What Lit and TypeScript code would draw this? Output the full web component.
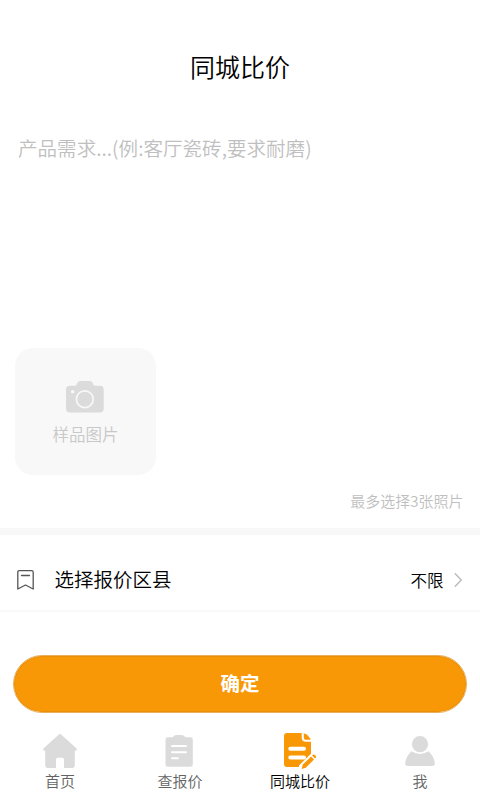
import { LitElement, html, css, svg } from "lit";
import { customElement, state } from "lit/decorators.js";
import { classMap } from "lit/directives/class-map.js";

const homeIcon = svg`
  <path d="M15.9 1.4 Q17 .6 18.1 1.4 L33.6 15.6 Q34.5 17 33 17.5 H31.8 V32 Q31.8 34.9 29.3 34.9 H21 V26.4 Q21 24.8 19.4 24.8 H14.6 Q13 24.8 13 26.4 V34.9 H4.7 Q2.2 34.9 2.2 32 V17.5 H1 Q-.5 17 .4 15.6 Z"/>`;

const quoteIcon = svg`
  <path d="M5 4.2 H9.5 Q11.2 2 13.7 2 H18.3 Q20.8 2 22.5 4.2 H27.3 Q29.8 4.2 29.8 6.7 V31.3 Q29.8 33.8 27.3 33.8 H5 Q2.5 33.8 2.5 31.3 V6.7 Q2.5 4.2 5 4.2 Z"/>
  <path class="line" d="M9 13 H23 M9 19.2 H23 M9 25.2 H15"/>`;

const compareIcon = svg`
  <path d="M4 0 H18.7 V4.5 Q18.7 8.8 23 8.8 H28 V20.8 L16 32.4 V34 H4 Q1 34 1 31 V3 Q1 0 4 0 Z"/>
  <path d="M20.8 .2 Q25.8 2 27.8 6.8 H23.3 Q20.8 6.8 20.8 4.2 Z"/>
  <path class="line thick" d="M7.3 15.7 H21 M7.3 24.6 H21"/>
  <path class="pencil" d="M19.8 31.6 L28.1 23.6 L31 26.4 L22.8 34.8 L18.6 36 Z"/>
  <path d="M29.1 22.5 L29.9 21.7 Q30.9 21 31.9 21.9 L32.7 22.7 Q33.6 23.7 32.8 24.7 L32 25.4 Z"/>`;

const userIcon = svg`
  <circle cx="17" cy="11.2" r="8.1"/>
  <path d="M8.7 18.3 Q12 21 17 21 Q22 21 25.3 18.3 Q30.3 22 31.7 29.3 Q32.3 33 29 33 H5 Q1.7 33 2.3 29.3 Q3.7 22 8.7 18.3 Z"/>`;

const tabs = [
  { label: "首页", icon: homeIcon },
  { label: "查报价", icon: quoteIcon },
  { label: "同城比价", icon: compareIcon },
  { label: "我", icon: userIcon },
];

@customElement("app-root")
export class AppRoot extends LitElement {
  @state() private active = 2;

  static styles = css`
    :host {
      display: flex;
      flex-direction: column;
      height: 800px;
      overflow: hidden;
      background: #fff;
      color: #000;
      font-family: "Noto Sans CJK SC", sans-serif;
      font-weight: 350;
    }
    * { box-sizing: border-box; }
    svg { display: block; flex: none; }
    h1 {
      margin: 0;
      padding-top: 47px;
      height: 129px;
      font-size: 25px;
      line-height: 38px;
      font-weight: 350;
      text-align: center;
    }
    textarea {
      display: block;
      height: 219px;
      flex: none;
      padding: 4px 18px;
      border: 0;
      outline: 0;
      resize: none;
      background: none;
      font: 350 19.5px/30px "Noto Sans CJK SC", sans-serif;
      letter-spacing: 0.05px;
    }
    textarea::placeholder { color: #bfbfbf; opacity: 1; }
    .upload {
      display: flex;
      flex-direction: column;
      align-items: center;
      width: 141px;
      height: 127px;
      flex: none;
      margin-left: 15px;
      padding-top: 32px;
      border-radius: 18px;
      background: #f8f8f8;
      color: #c8c8c8;
      font-size: 16.5px;
      line-height: 24px;
    }
    .upload svg { margin: 0 2px 9px 0; }
    .note {
      height: 53px;
      flex: none;
      padding: 14px 16.5px 0 0;
      text-align: right;
      color: #bfbfbf;
      font-size: 15px;
      line-height: 23px;
    }
    .divider { height: 7px; flex: none; background: #f8f8f8; }
    .row {
      display: flex;
      align-items: center;
      height: 77px;
      flex: none;
      padding: 14px 17px 0 16px;
      border-bottom: 2px solid #f9f9f9;
    }
    .row .name { margin-left: 19.5px; flex: 1; font-size: 19.5px; line-height: 30px; padding-bottom: 1px; }
    .row .value { margin-right: 10.5px; font-size: 16.5px; line-height: 24px; }
    .submit {
      height: 58px;
      flex: none;
      margin: 43px 13px 0;
      padding: 0 0 3px;
      border: 1px solid #e8b05a;
      border-radius: 29px;
      background: #f99807;
      background-clip: padding-box;
      box-shadow: inset 0 0 0 1px #ea9008;
      color: #fff;
      font: 700 19.5px/30px "Noto Sans CJK SC", sans-serif;
    }
    nav { display: grid; grid-template-columns: repeat(4, 1fr); padding-top: 20px; }
    .tab {
      display: flex;
      flex-direction: column;
      align-items: center;
      color: #636363;
      font-size: 15px;
      line-height: 22px;
    }
    .tab svg { fill: #dbdbdb; margin-bottom: 1px; overflow: visible; }
    .tab.active { color: #000; }
    .tab.active svg { fill: #f99807; }
    .line { fill: none; stroke: #fff; stroke-width: 2; stroke-linecap: round; }
    .thick { stroke-width: 4; }
    .pencil { stroke: #fff; stroke-width: 2.4; paint-order: stroke; }
  `;

  render() {
    return html`
      <h1>同城比价</h1>
      <textarea placeholder="产品需求...(例:客厅瓷砖,要求耐磨)"></textarea>
      <div class="upload">
        <svg width="38" height="33" viewBox="0 0 38 33">
          <path fill="#dbdbdb" d="M4 5.8 H9 Q10.7 5.5 11.3 3 Q12 1 14.2 1 H23.8 Q26 1 26.7 3 Q27.3 5.5 29 5.8 H34 Q37.7 5.8 37.7 9.8 V28.4 Q37.7 32.4 34 32.4 H4 Q0 32.4 0 28.4 V9.8 Q0 5.8 4 5.8 Z"/>
          <circle cx="18.8" cy="19.2" r="8.4" fill="none" stroke="#f8f8f8" stroke-width="1.7"/>
          <circle cx="6.7" cy="11.7" r="1.8" fill="#f8f8f8"/>
        </svg>
        <span>样品图片</span>
      </div>
      <div class="note">最多选择3张照片</div>
      <div class="divider"></div>
      <div class="row">
        <svg width="19" height="22" viewBox="0 0 19 22" fill="none" stroke="#555" stroke-width="1.3" stroke-linejoin="round" stroke-linecap="round">
          <path d="M3.3 1.7 H15.7 Q17.2 1.7 17.2 3.2 V20 L9.5 16 L1.8 20 V3.2 Q1.8 1.7 3.3 1.7 Z M5.5 6.5 H13.5"/>
        </svg>
        <span class="name">选择报价区县</span>
        <span class="value">不限</span>
        <svg width="9" height="16" viewBox="0 0 9 16" fill="none" stroke="#bfbfbf" stroke-width="1.6">
          <path d="M.8 1.2 L7.2 8 L.8 14.8"/>
        </svg>
      </div>
      <button class="submit">确定</button>
      <nav>
        ${tabs.map(
          (tab, i) => html`
            <div class=${classMap({ tab: true, active: i === this.active })} @click=${() => (this.active = i)}>
              <svg width="34" height="36" viewBox="0 0 34 36">${tab.icon}</svg>
              <span>${tab.label}</span>
            </div>
          `
        )}
      </nav>
    `;
  }
}
